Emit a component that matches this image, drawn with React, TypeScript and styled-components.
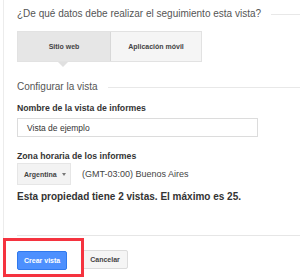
import styled, { createGlobalStyle } from "styled-components"

const GlobalStyle = createGlobalStyle`
  body {
    margin: 0;
    background: #fff;
    font-family: "Liberation Sans", Arial, sans-serif;
  }
`

const Page = styled.div`
  padding-left: 3px;
  height: 278px;
  overflow: hidden;
`

const Panel = styled.div`
  border-left: 1px solid #ececec;
  padding: 8px 0 0 13px;
  min-height: 278px;
  box-sizing: border-box;
`

const SectionHeading = styled.div<{ $top?: number }>`
  display: flex;
  align-items: center;
  gap: 10px;
  margin-top: ${p => p.$top ?? 0}px;
  font-size: 10px;
  line-height: 12px;
  color: #555;
  white-space: nowrap;

  &::after {
    content: "";
    flex: 1;
    height: 1px;
    background: #e8e8e8;
  }
`

const Tabs = styled.div`
  display: flex;
  width: 185px;
  height: 31px;
  margin-top: 11px;
  border: 1px solid #e2e2e2;
  box-sizing: border-box;
`

const Tab = styled.div<{ $active?: boolean }>`
  position: relative;
  flex: ${p => (p.$active ? "0 0 92px" : "1")};
  display: flex;
  align-items: center;
  justify-content: center;
  background: ${p => (p.$active ? "#e6e6e6" : "#f5f5f5")};
  border-right: ${p => (p.$active ? "1px solid #d8d8d8" : "none")};
  font-size: 7px;
  font-weight: bold;
  color: #444;

  ${p =>
    p.$active &&
    `
    &::after {
      content: "";
      position: absolute;
      left: 40px;
      bottom: -6px;
      border-left: 5px solid transparent;
      border-right: 5px solid transparent;
      border-top: 5px solid #e0e0e0;
    }
  `}
`

const FieldLabel = styled.div<{ $top: number }>`
  margin-top: ${p => p.$top}px;
  font-size: 8.7px;
  line-height: 11px;
  font-weight: bold;
  color: #333;
`

const TextInput = styled.div`
  width: 241px;
  height: 19px;
  margin-top: 4px;
  border: 1px solid #dcdcdc;
  box-sizing: border-box;
  padding-left: 9px;
  display: flex;
  align-items: center;
  font-size: 8.5px;
  color: #333;
`

const ZoneRow = styled.div`
  display: flex;
  align-items: center;
  gap: 11px;
  margin-top: 1px;
`

const Dropdown = styled.div`
  width: 54px;
  height: 22px;
  box-sizing: border-box;
  background: #f3f3f3;
  border: 1px solid #e6e6e6;
  display: flex;
  align-items: center;
  padding-left: 6px;
  gap: 5px;
  font-size: 7px;
  font-weight: bold;
  color: #444;
`

const Caret = styled.span`
  width: 0;
  height: 0;
  border-left: 2.5px solid transparent;
  border-right: 2.5px solid transparent;
  border-top: 3px solid #777;
`

const ZoneText = styled.div`
  font-size: 9px;
  color: #444;
`

const Note = styled.div`
  margin-top: 6px;
  font-size: 10px;
  line-height: 12px;
  font-weight: bold;
  color: #333;
`

const Divider = styled.div`
  height: 1px;
  background: #e6e6e6;
  margin-top: 32px;
`

const Actions = styled.div`
  display: flex;
  align-items: center;
  gap: 15px;
  margin-top: 13px;
`

const Highlight = styled.div`
  position: relative;

  &::before {
    content: "";
    position: absolute;
    left: -14px;
    top: -11px;
    right: -17px;
    bottom: -7px;
    border: 3px solid #f5333f;
  }
`

const Button = styled.button<{ $primary?: boolean }>`
  height: 19px;
  padding: 0 ${p => (p.$primary ? 6 : 7)}px;
  border: 1px solid ${p => (p.$primary ? "#3079ed" : "#dcdcdc")};
  border-radius: 2px;
  background: ${p => (p.$primary ? "#4d90fe" : "#f5f5f5")};
  color: ${p => (p.$primary ? "#fff" : "#444")};
  font-family: inherit;
  font-size: 7px;
  font-weight: bold;
  cursor: pointer;
`

const App = () => {
  return (
    <Page>
      <GlobalStyle />
      <Panel>
        <SectionHeading>¿De qué datos debe realizar el seguimiento esta vista?</SectionHeading>

        <Tabs>
          <Tab $active>Sitio web</Tab>
          <Tab>Aplicación móvil</Tab>
        </Tabs>

        <SectionHeading $top={19}>Configurar la vista</SectionHeading>

        <FieldLabel $top={10}>Nombre de la vista de informes</FieldLabel>
        <TextInput>Vista de ejemplo</TextInput>

        <FieldLabel $top={14}>Zona horaria de los informes</FieldLabel>
        <ZoneRow>
          <Dropdown>
            Argentina <Caret />
          </Dropdown>
          <ZoneText>(GMT-03:00) Buenos Aires</ZoneText>
        </ZoneRow>

        <Note>Esta propiedad tiene 2 vistas. El máximo es 25.</Note>

        <Divider />

        <Actions>
          <Highlight>
            <Button $primary>Crear vista</Button>
          </Highlight>
          <Button>Cancelar</Button>
        </Actions>
      </Panel>
    </Page>
  )
}

export default App
